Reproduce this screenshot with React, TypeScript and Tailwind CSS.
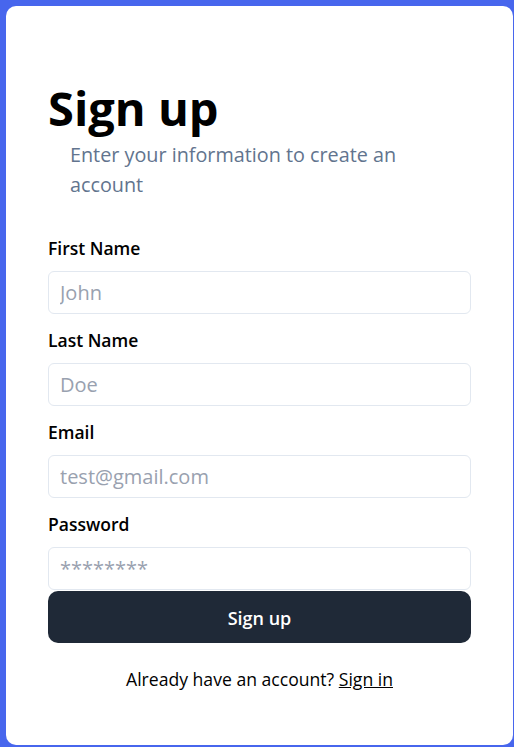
import React from "react";

const font = { fontFamily: '"Open Sans", "Noto Sans", sans-serif' };

function Field({ label, placeholder, type = "text" }: { label: string; placeholder: string; type?: string }) {
  return (
    <div className="flex flex-col">
      <label className="pt-[2px] text-[17.5px] leading-[28px] font-semibold text-black">{label}</label>
      <input
        type={type}
        placeholder={placeholder}
        className="mt-[9px] h-[43px] w-full rounded-md border border-slate-200 bg-white px-[11px] text-[20px] text-black outline-none placeholder:text-gray-400"
      />
    </div>
  );
}

export default function App() {
  return (
    <div style={font} className="h-[747px] w-full bg-[#4766ed] pt-[6px] pl-[6px] pr-[1px] pb-[2px]">
      <div className="h-full rounded-[10px] bg-white px-[42px] pt-[78px]">
        <h1 className="text-[47px] leading-[48px] font-bold text-black">Sign up</h1>
        <p className="mt-[8px] pl-[22px] text-[19.8px] leading-[30px] text-slate-500">
          Enter your information to create an account
        </p>
        <div className="mt-[32px] flex flex-col gap-[10px]">
          <Field label="First Name" placeholder="John" />
          <Field label="Last Name" placeholder="Doe" />
          <Field label="Email" placeholder="test@gmail.com" type="email" />
          <Field label="Password" placeholder="********" type="password" />
        </div>
        <button className="mt-px flex h-[52px] w-full items-center justify-center rounded-[10px] bg-[#1f2937] pt-[2px] text-[18px] font-semibold text-white">
          Sign up
        </button>
        <p className="mt-[22px] text-center text-[17.6px] leading-[28px] text-black">
          Already have an account? <a className="underline">Sign in</a>
        </p>
      </div>
    </div>
  );
}
